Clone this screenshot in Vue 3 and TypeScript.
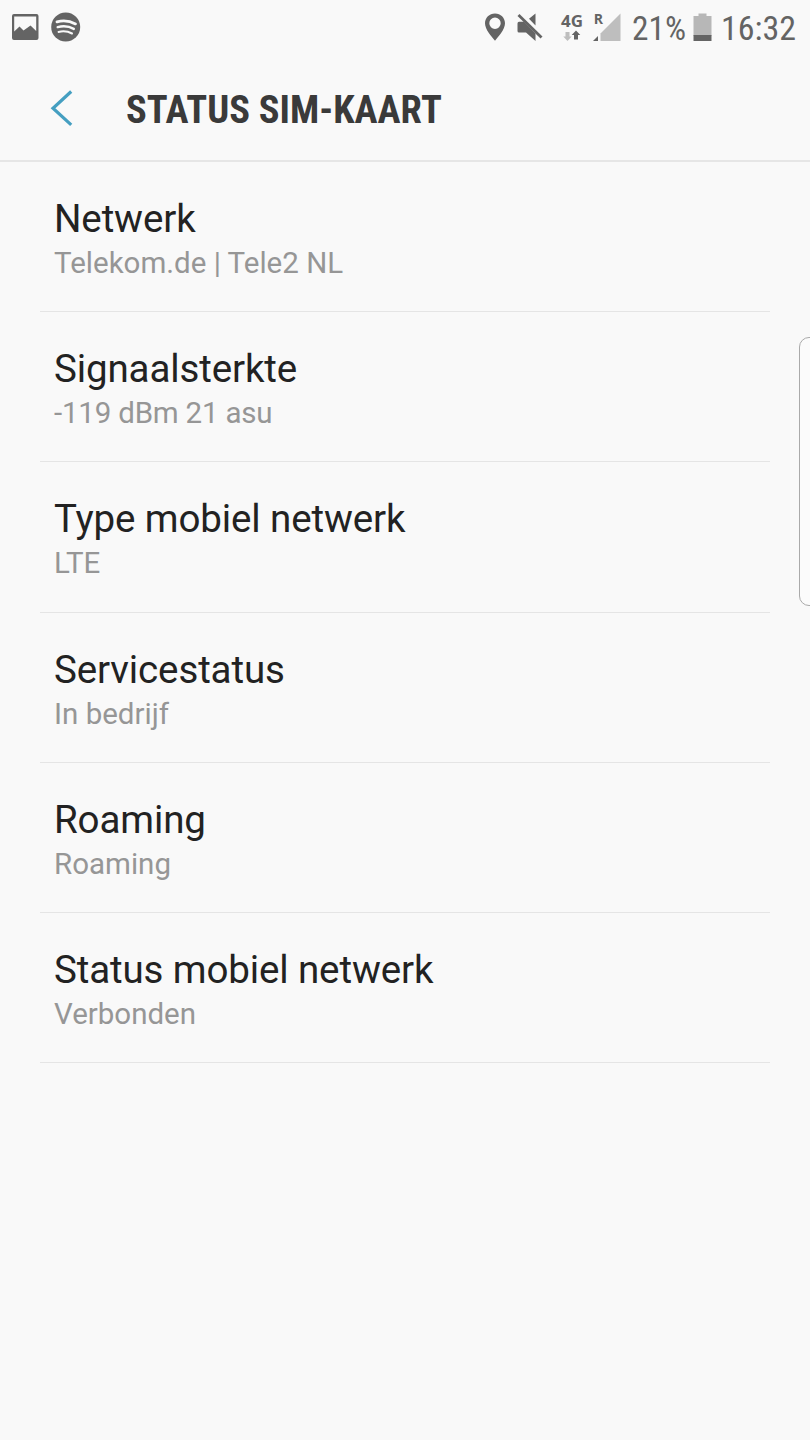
<script setup lang="ts">
interface StatusItem {
  title: string
  value: string
}

const items: StatusItem[] = [
  { title: 'Netwerk', value: 'Telekom.de | Tele2 NL' },
  { title: 'Signaalsterkte', value: '-119 dBm 21 asu' },
  { title: 'Type mobiel netwerk', value: 'LTE' },
  { title: 'Servicestatus', value: 'In bedrijf' },
  { title: 'Roaming', value: 'Roaming' },
  { title: 'Status mobiel netwerk', value: 'Verbonden' },
]
</script>

<template>
  <div class="screen">
    <div class="statusbar">
      <svg class="notifications" width="100" height="54" viewBox="0 0 100 54">
        <path
          fill="#646464"
          fill-rule="evenodd"
          d="M14 14H36.500Q38.500 14 38.500 16V38Q38.500 40 36.500 40H14Q12 40 12 38V16Q12 14 14 14ZM14.200 16.500V31.500L19.500 26.500L23.500 30.500L30.500 25.500L36.200 31V16.500Z"
        />
        <circle cx="65.700" cy="27" r="14.500" fill="#646464" />
        <g fill="none" stroke="#f9f9f9" stroke-linecap="round">
          <path d="M57 21.800Q67 19.400 75.500 23.900" stroke-width="2.800" />
          <path d="M57.700 27.100Q66.500 24.800 73.800 28.900" stroke-width="2.400" />
          <path d="M58.500 31.900Q66 30.200 72 33.500" stroke-width="2" />
        </g>
      </svg>
      <svg class="indicators" width="334" height="54" viewBox="476 0 334 54">
        <path
          fill="#646464"
          fill-rule="evenodd"
          d="M495 13.500C489.300 13.500 485 17.900 485 23.300C485 29.500 491.500 36.500 495 40.800C498.500 36.500 505 29.500 505 23.300C505 17.900 500.700 13.500 495 13.500ZM495 17.600A5.700 5.700 0 1 1 495 29A5.700 5.700 0 1 1 495 17.600Z"
        />
        <path fill="#646464" d="M517.500 23.500Q517.500 21.800 519 21.800H524L535.500 33.500V41L526 32.500H519Q517.500 32.500 517.500 31ZM529 18.800L535.500 13.500V25.500Z" />
        <path d="M518.500 15L541.500 37.500" stroke="#646464" stroke-width="2.800" />
        <text class="network" x="561" y="27.300" textLength="22" lengthAdjust="spacingAndGlyphs">4G</text>
        <path fill="#bebebe" d="M565.500 32H569.500V36.500H571.700L567.500 41L563.300 36.500H565.500Z" />
        <path fill="#646464" d="M576 30.500L580.300 35H578V39.500H574V35H571.700Z" />
        <text class="roaming" x="593.700" y="24.300" textLength="9.300" lengthAdjust="spacingAndGlyphs">R</text>
        <path fill="#bebebe" d="M620.500 13.500V41H600.500V33.500Z" />
        <path fill="#646464" d="M598 36V41H593Z" />
        <text class="clock" x="632" y="40" textLength="54" lengthAdjust="spacingAndGlyphs">21%</text>
        <path fill="#b7b7b7" d="M698.500 13.500H706.500V16H711.500V36H693.500V16H698.500Z" />
        <path fill="#646464" d="M693.500 35H711.500V41H693.500Z" />
        <text class="clock" x="721" y="40" textLength="75" lengthAdjust="spacingAndGlyphs">16:32</text>
      </svg>
    </div>

    <header class="header">
      <svg class="heading" width="460" height="106" viewBox="0 54 460 106">
        <path d="M71.200 91.500L53 108.200L71.200 124.900" fill="none" stroke="#459fc1" stroke-width="3.200" />
        <text class="title" x="126" y="122.900" textLength="315.800" lengthAdjust="spacingAndGlyphs">STATUS SIM-KAART</text>
      </svg>
    </header>

    <main class="list">
      <div v-for="item in items" :key="item.title" class="item">
        <div class="name">{{ item.title }}</div>
        <div class="value">{{ item.value }}</div>
      </div>
    </main>

    <div class="edge-handle"></div>
  </div>
</template>

<style>
html,
body {
  margin: 0;
  background: #f9f9f9;
}
</style>

<style scoped>
.screen {
  position: relative;
  width: 810px;
  height: 1440px;
  overflow: hidden;
  background: #f9f9f9;
  font-family: Roboto, "Liberation Sans", sans-serif;
}
.statusbar {
  display: flex;
  justify-content: space-between;
  height: 54px;
}
svg {
  display: block;
}
.network {
  font-family: "Open Sans", Roboto, sans-serif;
  font-size: 16.500px;
  font-weight: 700;
  fill: #646464;
}
.roaming {
  font-family: "Open Sans", Roboto, sans-serif;
  font-size: 14.500px;
  font-weight: 700;
  fill: #646464;
}
.clock {
  font-family: "Roboto Condensed", Roboto, sans-serif;
  font-stretch: 75%;
  font-size: 34px;
  fill: #646464;
}
.header {
  height: 106px;
  border-bottom: 2px solid #e6e6e6;
}
.title {
  font-family: "Roboto Condensed", Roboto, sans-serif;
  font-stretch: 75%;
  font-size: 38.500px;
  font-weight: 700;
  fill: #3a3a3a;
}
.list {
  padding: 0 40px;
}
.item {
  box-sizing: border-box;
  height: 150.200px;
  padding: 34px 14px 0;
  border-bottom: 1.500px solid #e5e5e5;
}
.name {
  height: 46px;
  font-size: 38.500px;
  line-height: 46px;
  letter-spacing: -0.120px;
  white-space: nowrap;
  color: #222;
}
.value {
  height: 43px;
  font-size: 29.500px;
  line-height: 43px;
  white-space: nowrap;
  color: #969696;
}
.item:nth-child(2) .value {
  letter-spacing: -0.200px;
}
.edge-handle {
  position: absolute;
  top: 337px;
  left: 799px;
  box-sizing: border-box;
  width: 30px;
  height: 269px;
  border: 1.500px solid #aaa;
  border-radius: 10px;
  background: #fbfbfb;
}
</style>
